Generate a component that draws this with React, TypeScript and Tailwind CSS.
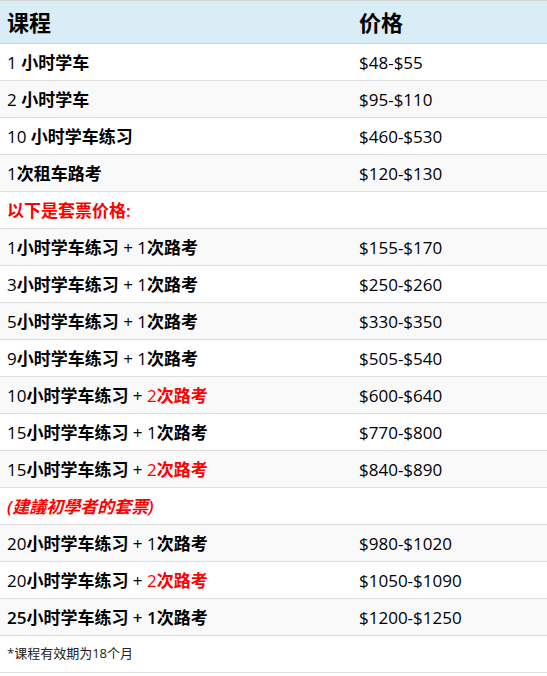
import React from "react";

type Row = { label: React.ReactNode; price?: string; strong?: boolean };

const cjk = /([\u3000-\u9fff\uff00-\uffef]+)/;

const T = ({ s }: { s: string }) => (
  <>
    {s.split(cjk).map((part, i) =>
      cjk.test(part) ? (
        <span key={i} className="font-semibold">
          {part}
        </span>
      ) : (
        <span key={i}>{part}</span>
      )
    )}
  </>
);

const R = ({ children }: { children: React.ReactNode }) => (
  <span className="text-[#ff0000]">{children}</span>
);

const rows: Row[] = [
  { label: <T s="1 小时学车" />, price: "$48-$55" },
  { label: <T s="2 小时学车" />, price: "$95-$110" },
  { label: <T s="10 小时学车练习" />, price: "$460-$530" },
  { label: <T s="1次租车路考" />, price: "$120-$130" },
  { label: <R><span className="font-semibold">以下是套票价格:</span></R> },
  { label: <T s="1小时学车练习 + 1次路考" />, price: "$155-$170" },
  { label: <T s="3小时学车练习 + 1次路考" />, price: "$250-$260" },
  { label: <T s="5小时学车练习 + 1次路考" />, price: "$330-$350" },
  { label: <T s="9小时学车练习 + 1次路考" />, price: "$505-$540" },
  { label: <><T s="10小时学车练习 + " /><R><T s="2次路考" /></R></>, price: "$600-$640" },
  { label: <T s="15小时学车练习 + 1次路考" />, price: "$770-$800" },
  { label: <><T s="15小时学车练习 + " /><R><T s="2次路考" /></R></>, price: "$840-$890" },
  { label: <R><i className="font-semibold">(建議初學者的套票)</i></R> },
  { label: <T s="20小时学车练习 + 1次路考" />, price: "$980-$1020" },
  { label: <><T s="20小时学车练习 + " /><R><T s="2次路考" /></R></>, price: "$1050-$1090" },
  { label: <span className="font-semibold">25小时学车练习 + 1次路考</span>, price: "$1200-$1250" },
];

export default function App() {
  return (
    <div
      className="w-[547px] h-[676px] bg-white text-black"
      style={{ fontFamily: '"Open Sans", "Noto Sans CJK SC", sans-serif' }}
    >
      <div className="grid grid-cols-[359px_1fr] h-[44px] bg-[#d9edf7] border-t border-b border-[#d4d4d4] items-center text-[22px] font-bold leading-none">
        <div className="pl-[7px]">课程</div>
        <div>价格</div>
      </div>
      {rows.map((r, i) => (
        <div
          key={i}
          className={`grid grid-cols-[359px_1fr] h-[37px] border-b border-[#dddddd] items-center text-[17px] leading-none ${
            i % 2 === 1 ? "bg-[#f9f9f9]" : "bg-white"
          }`}
        >
          <div className="pl-[7px] whitespace-nowrap">{r.label}</div>
          <div>{r.price}</div>
        </div>
      ))}
      <div className="h-[37px] border-b border-[#dddddd] flex items-center pl-[7px] text-[13px] text-[#222]">
        *课程有效期为18个月
      </div>
    </div>
  );
}
